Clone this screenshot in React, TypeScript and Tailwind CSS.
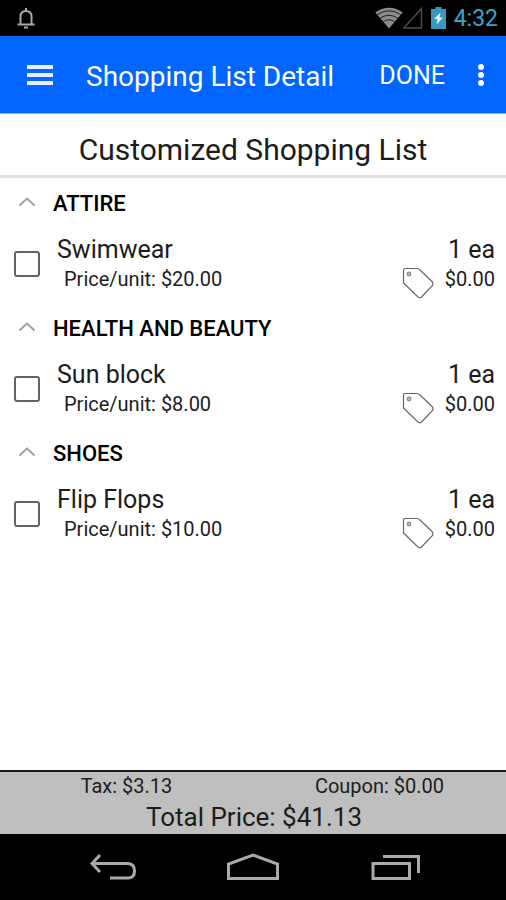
import React from "react";

type Item = {
  name: string;
  price: string;
  quantity: string;
  coupon: string;
};

type Section = {
  title: string;
  items: Item[];
};

const sections: Section[] = [
  {
    title: "ATTIRE",
    items: [{ name: "Swimwear", price: "$20.00", quantity: "1 ea", coupon: "$0.00" }],
  },
  {
    title: "HEALTH AND BEAUTY",
    items: [{ name: "Sun block", price: "$8.00", quantity: "1 ea", coupon: "$0.00" }],
  },
  {
    title: "SHOES",
    items: [{ name: "Flip Flops", price: "$10.00", quantity: "1 ea", coupon: "$0.00" }],
  },
];

const StatusBar = () => {
  return (
    <div className="flex h-9 items-center justify-between bg-black pl-4 pr-2">
      <svg width="20" height="22" viewBox="0 0 20 22" fill="none" stroke="#a8a8a8" strokeWidth="2">
        <path d="M4.500 17V9.500C4.500 5.500 6.500 4 10 4S15.500 5.500 15.500 9.500V17" />
        <path d="M1.500 17.500h17M10 1v3" />
        <path d="M8 20.500h4" strokeWidth="2" />
      </svg>
      <div className="flex items-center">
        <svg width="28" height="22" viewBox="0 0 28 22">
          <path d="M14 21.500L.3 5.500C8 -.8 20 -.8 27.700 5.500z" fill="#8a8a8a" />
          <g fill="none" stroke="#1c1c1c" strokeWidth="1">
            <path d="M2 8c7-5.500 17-5.500 24 0M5 11.500c5.500-4.200 12.500-4.200 18 0M8 15c3.800-2.800 8.200-2.800 12 0" />
          </g>
        </svg>
        <svg width="20" height="22" viewBox="0 0 20 22" fill="none" stroke="#4c4c4c" strokeWidth="1.500">
          <path d="M18.500 1.500v19.500H.8z" />
        </svg>
        <svg className="ml-2" width="15" height="24" viewBox="0 0 15 24">
          <path d="M4.500 1h6v2H15v20H0V3h4.500z" fill="#3798bf" />
          <path d="M9.500 6.500L3 13h3.500L5.500 18.500L12 11.500H8.500z" fill="#e8f6fc" />
        </svg>
        <span className="ml-2 pt-0.5 text-[23px] leading-8 text-[#37a5d0]">4:32</span>
      </div>
    </div>
  );
};

const Header = () => {
  return (
    <header className="flex h-[78px] items-center border-b border-[#7fb0ff] bg-[#0066ff] pl-[27px] pr-[13px] text-white">
      <button type="button" aria-label="Menu">
        <svg width="26" height="22" viewBox="0 0 26 22" fill="#ecebff">
          <path d="M0 1h26v4H0zM0 9h26v4H0zM0 17h26v4H0z" />
        </svg>
      </button>
      <h1 className="ml-[33px] flex-1 whitespace-nowrap pt-1 text-[28px] leading-9">Shopping List Detail</h1>
      <button type="button" className="pt-0.5 text-[25px] leading-9">
        DONE
      </button>
      <button type="button" aria-label="More options" className="ml-6 flex w-6 justify-center">
        <svg width="8" height="24" viewBox="0 0 8 24" fill="#fff">
          <circle cx="4" cy="4" r="3" />
          <circle cx="4" cy="12" r="3" />
          <circle cx="4" cy="20" r="3" />
        </svg>
      </button>
    </header>
  );
};

const Tag = () => {
  return (
    <svg width="32" height="32" viewBox="0 0 32 32" fill="none" stroke="#666" strokeWidth="1.200">
      <path d="M1.500 3Q1.500 1.500 3 1.500H15Q16.500 1.500 18 3L30 14.500Q31.500 16 30.500 18.500L19.500 30Q18 31.500 16 30L1.500 16z" />
      <circle cx="7" cy="7" r="1.800" stroke="#888" fill="#bbb" />
    </svg>
  );
};

const ItemRow = ({ item }: { item: Item }) => {
  return (
    <li>
      <label className="flex h-[75px] pl-[14px] pr-[11px]">
        <input
          type="checkbox"
          className="mt-[23px] h-[26px] w-[26px] appearance-none rounded-[3px] border-2 border-[#636363] bg-white checked:bg-[#0066ff]"
        />
        <span className="ml-[17px] flex-1 pt-[5px]">
          <span className="block text-[25px] leading-[34px]">{item.name}</span>
          <span className="block pl-[7px] text-[20px] leading-6">Price/unit: {item.price}</span>
        </span>
        <span className="pt-[5px] text-right">
          <span className="block text-[25px] leading-[34px]">{item.quantity}</span>
          <span className="flex h-6 gap-[11px] text-[20px] leading-6">
            <Tag />
            {item.coupon}
          </span>
        </span>
      </label>
    </li>
  );
};

const App = () => {
  return (
    <div className="flex min-h-screen flex-col bg-white font-[Roboto,sans-serif] text-[#1c1c1c]">
      <StatusBar />
      <Header />
      <h2 className="border-b-3 border-[#e0e0e0] pb-[7px] pt-[17px] text-center text-[30px] leading-[37px]">
        Customized Shopping List
      </h2>
      <main className="flex-1">
        {sections.map((section) => (
          <section key={section.title}>
            <button type="button" className="flex h-[50px] w-full items-center pl-[18px]">
              <svg width="18" height="12" viewBox="0 0 18 12" fill="none" stroke="#a0a0a0" strokeWidth="2">
                <path d="M1.500 8.500L9 1.500L16.500 8.500" />
              </svg>
              <span className="ml-[17px] pt-0.5 text-[22px] font-medium leading-6 text-black">{section.title}</span>
            </button>
            <ul>
              {section.items.map((item) => (
                <ItemRow key={item.name} item={item} />
              ))}
            </ul>
          </section>
        ))}
      </main>
      <footer className="border-t-2 border-[#1a1a1a] bg-[#bfbfbf]">
        <div className="grid grid-cols-2 text-center text-[20px] leading-7">
          <span>Tax: $3.13</span>
          <span>Coupon: $0.00</span>
        </div>
        <p className="pl-0.5 text-center text-[26px] leading-[34px]">Total Price: $41.13</p>
      </footer>
      <nav className="grid h-[66px] grid-cols-[1fr_84px_1fr] items-center bg-black">
        <button type="button" aria-label="Back" className="justify-self-end pr-[74px]">
          <svg width="48" height="28" viewBox="0 0 48 28" fill="none" stroke="#aaa" strokeWidth="3">
            <path d="M11 2L3 10.500L11 19M3 10.500H39Q45.500 11 45.500 18T39 25H21" />
          </svg>
        </button>
        <button type="button" aria-label="Home" className="justify-self-center">
          <svg width="54" height="28" viewBox="0 0 54 28" fill="none" stroke="#aaa" strokeWidth="3">
            <path d="M2.500 25.500V11L27 2L51.500 11V25.500z" />
          </svg>
        </button>
        <button type="button" aria-label="Recent apps" className="pl-[76px]">
          <svg width="50" height="28" viewBox="0 0 50 28" fill="none" stroke="#aaa" strokeWidth="3">
            <path d="M2 10.500H38.500V25.500H2zM12 3.500H47.500V20" />
          </svg>
        </button>
      </nav>
    </div>
  );
};

export default App;
